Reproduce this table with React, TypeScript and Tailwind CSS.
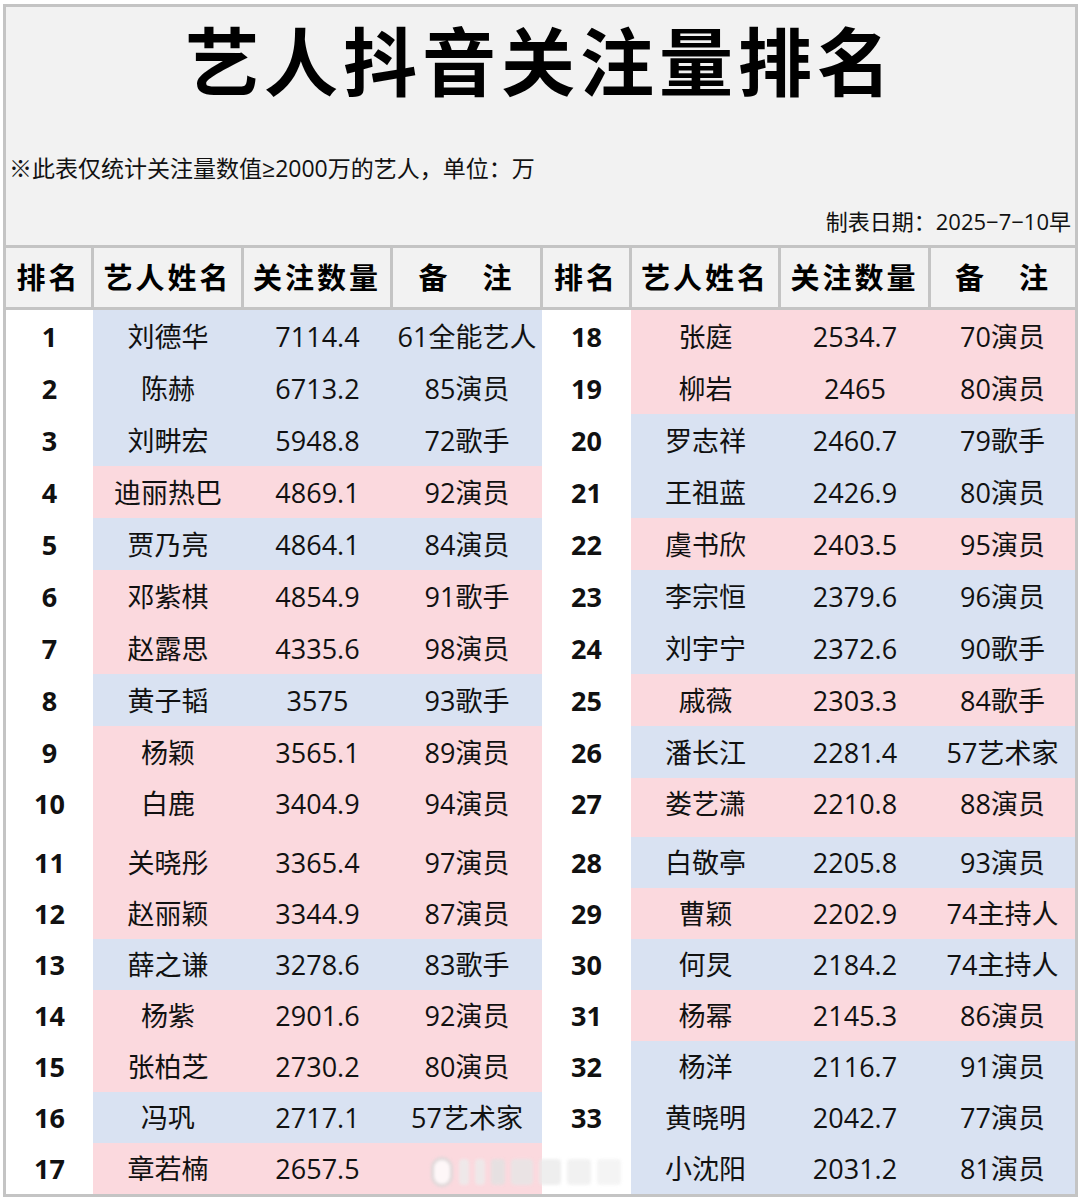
import React from "react";

type Row = { rank: string; name: string; count: string; note: string; c: "b" | "p" };

const left: Row[] = [
  { rank: "1", name: "刘德华", count: "7114.4", note: "61全能艺人", c: "b" },
  { rank: "2", name: "陈赫", count: "6713.2", note: "85演员", c: "b" },
  { rank: "3", name: "刘畊宏", count: "5948.8", note: "72歌手", c: "b" },
  { rank: "4", name: "迪丽热巴", count: "4869.1", note: "92演员", c: "p" },
  { rank: "5", name: "贾乃亮", count: "4864.1", note: "84演员", c: "b" },
  { rank: "6", name: "邓紫棋", count: "4854.9", note: "91歌手", c: "p" },
  { rank: "7", name: "赵露思", count: "4335.6", note: "98演员", c: "p" },
  { rank: "8", name: "黄子韬", count: "3575", note: "93歌手", c: "b" },
  { rank: "9", name: "杨颖", count: "3565.1", note: "89演员", c: "p" },
  { rank: "10", name: "白鹿", count: "3404.9", note: "94演员", c: "p" },
  { rank: "11", name: "关晓彤", count: "3365.4", note: "97演员", c: "p" },
  { rank: "12", name: "赵丽颖", count: "3344.9", note: "87演员", c: "p" },
  { rank: "13", name: "薛之谦", count: "3278.6", note: "83歌手", c: "b" },
  { rank: "14", name: "杨紫", count: "2901.6", note: "92演员", c: "p" },
  { rank: "15", name: "张柏芝", count: "2730.2", note: "80演员", c: "p" },
  { rank: "16", name: "冯巩", count: "2717.1", note: "57艺术家", c: "b" },
  { rank: "17", name: "章若楠", count: "2657.5", note: "", c: "p" },
];

const right: Row[] = [
  { rank: "18", name: "张庭", count: "2534.7", note: "70演员", c: "p" },
  { rank: "19", name: "柳岩", count: "2465", note: "80演员", c: "p" },
  { rank: "20", name: "罗志祥", count: "2460.7", note: "79歌手", c: "b" },
  { rank: "21", name: "王祖蓝", count: "2426.9", note: "80演员", c: "b" },
  { rank: "22", name: "虞书欣", count: "2403.5", note: "95演员", c: "p" },
  { rank: "23", name: "李宗恒", count: "2379.6", note: "96演员", c: "b" },
  { rank: "24", name: "刘宇宁", count: "2372.6", note: "90歌手", c: "b" },
  { rank: "25", name: "戚薇", count: "2303.3", note: "84歌手", c: "p" },
  { rank: "26", name: "潘长江", count: "2281.4", note: "57艺术家", c: "b" },
  { rank: "27", name: "娄艺潇", count: "2210.8", note: "88演员", c: "p" },
  { rank: "28", name: "白敬亭", count: "2205.8", note: "93演员", c: "b" },
  { rank: "29", name: "曹颖", count: "2202.9", note: "74主持人", c: "p" },
  { rank: "30", name: "何炅", count: "2184.2", note: "74主持人", c: "b" },
  { rank: "31", name: "杨幂", count: "2145.3", note: "86演员", c: "p" },
  { rank: "32", name: "杨洋", count: "2116.7", note: "91演员", c: "b" },
  { rank: "33", name: "黄晓明", count: "2042.7", note: "77演员", c: "b" },
  { rank: "", name: "小沈阳", count: "2031.2", note: "81演员", c: "b" },
];

const headers = ["排名", "艺人姓名", "关注数量", "备　注", "排名", "艺人姓名", "关注数量", "备　注"];

function Cells({ r, pad }: { r: Row; pad: string }) {
  const bg = r.c === "b" ? "bg-[#d9e2f2]" : "bg-[#fbd9de]";
  return (
    <>
      <div className={`flex items-center justify-center bg-white font-bold ${pad}`}>{r.rank}</div>
      <div className={`flex items-center justify-center ${bg} ${pad}`}>{r.name}</div>
      <div className={`flex items-center justify-center ${bg} ${pad}`}>{r.count}</div>
      <div className={`flex items-center justify-center whitespace-nowrap ${bg} ${pad}`}>{r.note}</div>
    </>
  );
}

export default function App() {
  return (
    <div className="w-[1080px] h-[1200px] bg-white pt-[4px] pl-[3px] pr-[2px] text-[#111] font-['Open_Sans','Noto_Sans_CJK_SC',sans-serif]">
      <div className="relative border-[3px] border-[#c4c4c4]">
        {/* title block */}
        <div className="h-[238px] bg-[#f2f2f2] flex flex-col">
          <div className="mt-[10px] h-[82px] flex items-center justify-center text-[74px] leading-none font-bold tracking-[5px] text-black font-['Noto_Sans_CJK_SC',sans-serif]">
            艺人抖音关注量排名
          </div>
          <div className="mt-[58px] h-[23px] pl-[3px] text-[23px] leading-none whitespace-nowrap">
            ※此表仅统计关注量数值≥2000万的艺人，单位：万
          </div>
          <div className="mt-[30px] h-[22px] pr-[4px] text-right text-[22px] leading-none whitespace-nowrap">
            制表日期：2025−7−10早
          </div>
        </div>
        {/* header */}
        <div className="grid grid-cols-[85px_147px_146px_147px_86px_146px_147px_144px] gap-x-[3px] bg-[#c4c4c4] border-y-[3px] border-[#c4c4c4]">
          {headers.map((h, i) => (
            <div
              key={i}
              className="h-[59px] bg-[#f2f2f2] flex items-center justify-center text-[29px] font-bold tracking-[3px] text-black whitespace-nowrap"
            >
              {h}
            </div>
          ))}
        </div>
        {/* data */}
        <div className="text-[27px] leading-none">
          {left.map((l, i) => {
            const h = i < 9 ? "h-[52px]" : i === 9 ? "h-[59px]" : "h-[51px]";
            const pad = i === 9 ? "pb-[8px]" : "";
            return (
              <div
                key={i}
                className={`grid grid-cols-[87px_150px_149px_150px_89px_149px_150px_145px] ${h}`}
              >
                <Cells r={l} pad={pad} />
                <Cells r={right[i]} pad={pad} />
              </div>
            );
          })}
        </div>
        {/* blurred watermark */}
        <div className="absolute left-[425px] top-[1150px] flex items-center gap-[6px] opacity-80 blur-[1.5px]">
          <div className="w-[22px] h-[30px] rounded-full border-[3px] border-[#d8d8d8] bg-white" />
          <div className="w-[10px] h-[26px] rounded-[4px] bg-[#ececec]" />
          <div className="w-[10px] h-[26px] rounded-[4px] bg-[#ececec]" />
          <div className="w-[14px] h-[26px] rounded-[4px] bg-[#e2e2e2]" />
          <div className="w-[22px] h-[26px] rounded-[4px] bg-[#e6e6e6]" />
          <div className="w-[22px] h-[26px] rounded-[4px] bg-[#eaeaea]" />
          <div className="w-[24px] h-[26px] rounded-[4px] bg-[#eeeeee]" />
          <div className="w-[24px] h-[26px] rounded-[4px] bg-[#f2f2f2]" />
        </div>
      </div>
    </div>
  );
}
